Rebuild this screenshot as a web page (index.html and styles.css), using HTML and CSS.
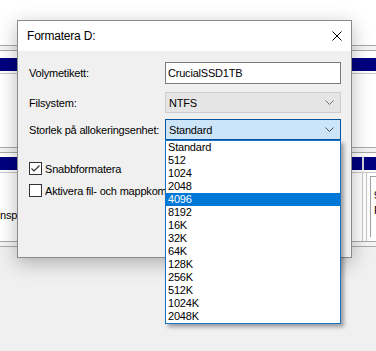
FILE: index.html
```html
<!DOCTYPE html>
<html lang="sv">
<head>
<meta charset="UTF-8">
<title>Formatera D:</title>
<link rel="stylesheet" href="styles.css">
</head>
<body>

<div class="desk">
  <div class="desk-top"></div>
  <div class="band"></div>
  <div class="gap-7"></div>
  <div class="navy"></div>
  <div class="gap-3"></div>
  <div class="pane pane-upper"></div>
  <div class="band"></div>
  <div class="gap-4"></div>
  <div class="navy navy-split">
    <div class="navy-part navy-wide"></div>
    <div class="navy-sep"></div>
    <div class="navy-part"></div>
  </div>
  <div class="gap-3"></div>
  <div class="pane pane-lower">
    <div class="pane-left">nspänning</div>
    <div class="pane-right">
      <div class="vline"></div>
      <div class="info-box">
        <div>9,31 GB</div>
        <div>Fri</div>
      </div>
    </div>
  </div>
  <div class="band"></div>
</div>

<div class="dialog">
  <div class="titlebar">
    <span class="title">Formatera D:</span>
    <svg class="close" width="10" height="10" viewBox="0 0 10 10">
      <path d="M0.5 0.5 L9.5 9.5 M9.5 0.5 L0.5 9.5" stroke="#000" stroke-width="1" fill="none"/>
    </svg>
  </div>
  <div class="dlg-body">
    <div class="row">
      <label class="lbl" for="volume">Volymetikett:</label>
      <input class="field" id="volume" type="text" value="CrucialSSD1TB">
    </div>
    <div class="row row-fs">
      <span class="lbl">Filsystem:</span>
      <div class="combo combo-disabled">
        <span>NTFS</span>
        <svg class="chev" width="9" height="5" viewBox="0 0 9 5"><path d="M0.5 0.5 L4.5 4.5 L8.5 0.5" stroke="#707070" fill="none"/></svg>
      </div>
    </div>
    <div class="row row-size">
      <span class="lbl">Storlek på allokeringsenhet:</span>
      <div class="combo-wrap">
        <div class="combo combo-open">
          <span>Standard</span>
          <svg class="chev" width="9" height="5" viewBox="0 0 9 5"><path d="M0.5 0.5 L4.5 4.5 L8.5 0.5" stroke="#505050" fill="none"/></svg>
        </div>
        <ul class="droplist">
          <li>Standard</li>
          <li>512</li>
          <li>1024</li>
          <li>2048</li>
          <li class="selected">4096</li>
          <li>8192</li>
          <li>16K</li>
          <li>32K</li>
          <li>64K</li>
          <li>128K</li>
          <li>256K</li>
          <li>512K</li>
          <li>1024K</li>
          <li>2048K</li>
        </ul>
      </div>
    </div>
    <div class="check check-first">
      <span class="box">
        <svg width="11" height="11" viewBox="0 0 11 11"><path d="M1.5 5.5 L4 8 L9.5 2.5" stroke="#333" stroke-width="1.2" fill="none"/></svg>
      </span>
      <span class="check-text">Snabbformatera</span>
    </div>
    <div class="check">
      <span class="box"></span>
      <span class="check-text">Aktivera fil- och mappkomprimering</span>
    </div>
  </div>
</div>

</body>
</html>
```

FILE: styles.css
```css
html, body {
  margin: 0;
  padding: 0;
}
body {
  width: 376px;
  height: 351px;
  overflow: hidden;
  background-color: #f0f0f0;
  font-family: "Liberation Sans", Arial, sans-serif;
  font-size: 11px;
  letter-spacing: -0.2px;
  color: #000;
  position: relative;
}

/* window behind the dialog */
.desk-top {
  height: 45px;
  background-color: #fff;
}
.band {
  height: 4px;
  background-color: #f4f4f4;
  border-top: 1px solid #a9a9a9;
  border-bottom: 1px solid #a9a9a9;
}
.gap-7 {
  height: 7px;
  background-color: #fff;
}
.gap-4 {
  height: 4px;
  background-color: #fff;
}
.gap-3 {
  height: 2px;
  background-color: #fff;
  border-bottom: 1px solid #c8c8c8;
}
.navy {
  height: 13px;
  background-color: #000080;
}
.navy-split {
  display: flex;
  background-color: #fff;
}
.navy-part {
  flex: 1;
  background-color: #000080;
}
.navy-wide {
  flex: 0 0 362px;
}
.navy-sep {
  width: 2px;
  background-color: #d8d8d8;
}
.pane {
  background-color: #fff;
}
.pane-upper {
  height: 73px;
}
.pane-lower {
  height: 68px;
  display: flex;
}
.pane-left {
  flex: 1;
  padding-top: 35px;
  line-height: 14px;
  white-space: nowrap;
  overflow: hidden;
}
.pane-right {
  width: 14px;
  display: flex;
}
.vline {
  width: 3px;
  border-left: 1px solid #c8c8c8;
  border-right: 1px solid #c8c8c8;
}
.info-box {
  flex: 1;
  margin: 3px 0 4px 3px;
  border-top: 1px solid #a0a0a0;
  border-left: 1px solid #a0a0a0;
  padding: 11px 0 0 3px;
  line-height: 15px;
  white-space: nowrap;
  overflow: hidden;
}

/* dialog */
.dialog {
  position: absolute;
  left: 17px;
  top: 20px;
  width: 333px;
  height: 236px;
  border: 1px solid #8a8a8a;
  background-color: #f0f0f0;
  box-shadow: 0 5px 18px rgba(0, 0, 0, 0.28);
}
.titlebar {
  height: 30px;
  background-color: #fff;
  display: flex;
  align-items: center;
  justify-content: space-between;
  padding: 0 9px;
}
.title {
  font-size: 12px;
  padding-bottom: 1px;
}
.close {
  display: block;
}
.dlg-body {
  padding: 11px 9px 0 11px;
}
.row {
  display: flex;
  align-items: center;
}
.lbl {
  width: 136px;
  flex: 0 0 136px;
  white-space: nowrap;
}
.row-fs {
  margin-top: 8px;
}
.row-size {
  margin-top: 6px;
}
.field {
  box-sizing: border-box;
  width: 176px;
  height: 22px;
  margin: 0;
  border: 1px solid #7a7a7a;
  padding: 0 2px;
  font-family: inherit;
  font-size: 11px;
  letter-spacing: -0.2px;
  color: #000;
  background-color: #fff;
  outline: none;
}
.combo {
  box-sizing: border-box;
  width: 176px;
  height: 21px;
  display: flex;
  align-items: center;
  justify-content: space-between;
  padding: 0 6px 0 3px;
}
.combo-disabled {
  background-color: #e5e5e5;
  border: 1px solid #cccccc;
}
.combo-open {
  background-color: #cce4f7;
  border: 1px solid #005499;
}
.chev {
  display: block;
}
.combo-wrap {
  position: relative;
}
.droplist {
  position: absolute;
  left: 0;
  top: 21px;
  width: 174px;
  margin: 0;
  padding: 0;
  list-style: none;
  background-color: #fff;
  border: 1px solid #1673cc;
  box-shadow: 3px 3px 4px rgba(0, 0, 0, 0.35);
  z-index: 2;
}
.droplist li {
  height: 13px;
  line-height: 13px;
  padding-left: 2px;
}
.droplist li.selected {
  background-color: #0078d7;
  color: #fff;
}
.check {
  display: flex;
  align-items: center;
  width: 136px;
  height: 13px;
  margin-top: 9px;
  white-space: nowrap;
}
.check-first {
  margin-top: 22px;
}
.check-text {
  flex: 1;
  min-width: 0;
  overflow: hidden;
}
.box {
  box-sizing: border-box;
  width: 13px;
  height: 13px;
  flex: 0 0 13px;
  border: 1px solid #333;
  background-color: #fff;
  margin-right: 3px;
  display: flex;
  align-items: center;
  justify-content: center;
}
.box svg {
  display: block;
}
```
